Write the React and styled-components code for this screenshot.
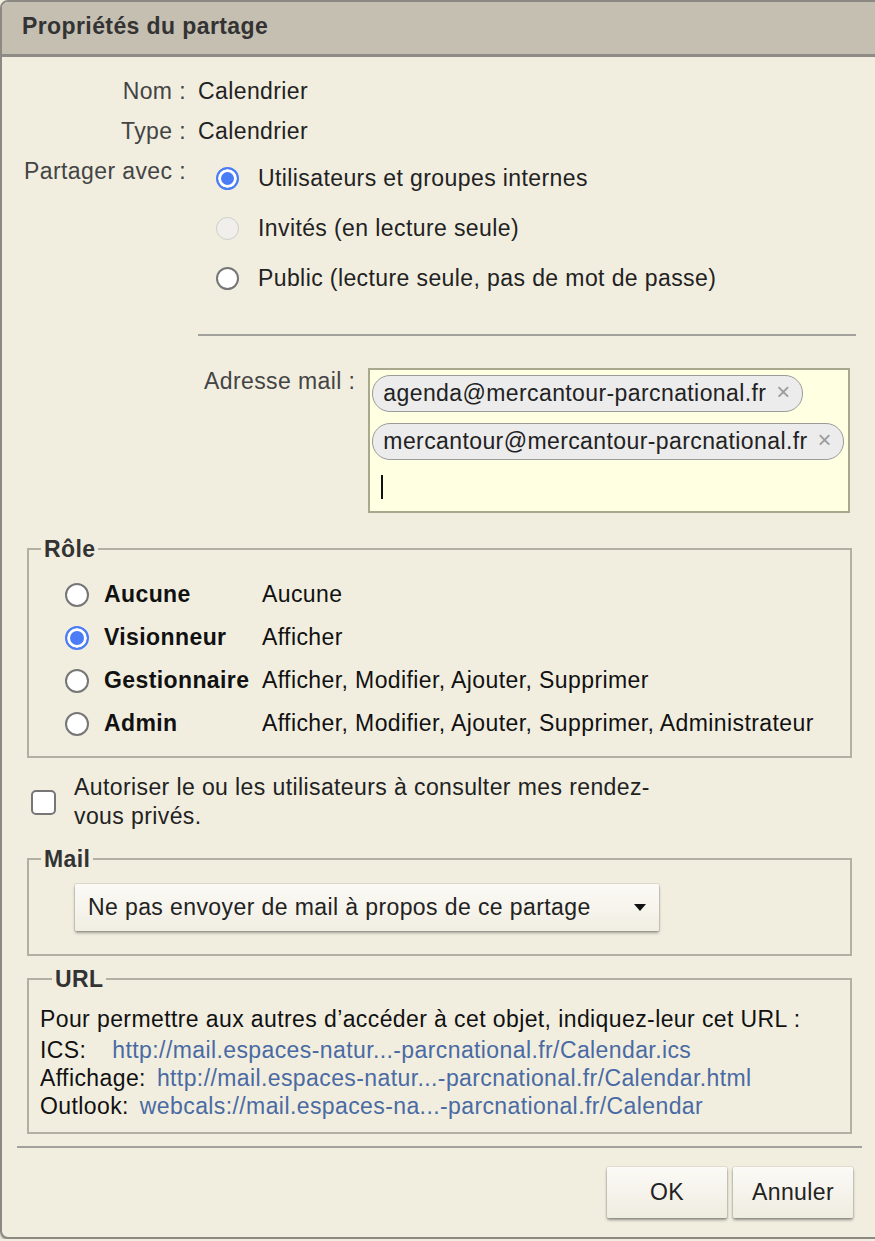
import React from 'react';
import styled, { createGlobalStyle } from 'styled-components';

const GlobalStyle = createGlobalStyle`
  html, body {
    margin: 0;
    padding: 0;
    background: #f1eee0;
    overflow: hidden;
  }
  body {
    font-family: 'Liberation Sans', Arial, sans-serif;
    font-size: 23px;
    letter-spacing: 0.4px;
    color: #222;
  }
`;

const Dialog = styled.div`
  width: 890px;
  height: 1239px;
  box-sizing: border-box;
  border: 2px solid #8c8983;
  border-radius: 8px;
  background: #f1eee0;
  display: flex;
  flex-direction: column;
  overflow: hidden;
  box-shadow: 0 2px 2px rgba(0, 0, 0, 0.25);
`;

const Header = styled.div`
  background: #c5bfb2;
  border-bottom: 3px solid #8f8c85;
  display: flex;
  align-items: center;
  padding: 0 0 3px 20px;
  box-sizing: border-box;
  height: 55px;
  font-size: 23px;
  font-weight: bold;
  color: #333;
`;

const Body = styled.div`
  flex: 1;
  display: flex;
  flex-direction: column;
  padding: 14px 0 0 0;
`;

const InfoGrid = styled.div`
  display: grid;
  grid-template-columns: 184px 1fr;
  column-gap: 12px;
`;

const Label = styled.div`
  text-align: right;
  color: #444;
  line-height: 40px;
  white-space: nowrap;
`;

const Value = styled.div`
  line-height: 40px;
  color: #222;
`;

const Options = styled.div`
  padding-top: 2px;
  padding-left: 18px;
`;

const Option = styled.label`
  display: flex;
  align-items: center;
  height: 50px;
  gap: 19px;
  color: #222;
`;

const Radio = styled.span`
  box-sizing: border-box;
  width: ${(p) => p.size || 23}px;
  height: ${(p) => p.size || 23}px;
  border-radius: 50%;
  flex-shrink: 0;
  background: ${(p) => (p.checked ? '#4a7cf5' : p.disabled ? '#f0efec' : '#fff')};
  border: ${(p) =>
    p.checked ? '2px solid #4a7cf5' : p.disabled ? '1.5px solid #cfcdc8' : '2px solid #767676'};
  box-shadow: ${(p) => (p.checked ? 'inset 0 0 0 3px #fff' : 'none')};
`;

const Separator = styled.div`
  height: 2px;
  background: #a3a19b;
  margin: ${(p) => p.margin};
`;

const MailRow = styled.div`
  display: flex;
  align-items: flex-start;
  gap: 13px;
  margin-left: 196px;
  padding-left: 6px;
`;

const MailLabel = styled.div`
  color: #444;
  line-height: 26px;
  white-space: nowrap;
`;

const TagBox = styled.div`
  box-sizing: border-box;
  width: 482px;
  height: 145px;
  background: #ffffe2;
  border: 2px solid #aaa78f;
  padding: 5px 2px;
  display: flex;
  flex-direction: column;
  align-items: flex-start;
  gap: 11px;
`;

const Tag = styled.span`
  box-sizing: border-box;
  height: 37px;
  display: inline-flex;
  align-items: center;
  padding: 0 11px 0 10px;
  background: #ececec;
  border: 1.5px solid #9a9a9a;
  border-radius: 18px;
  color: #222;
  gap: 10px;
  white-space: nowrap;
`;

const TagClose = styled.span`
  font-size: 24px;
  color: #9c9c9c;
  line-height: 1;
  margin-top: -4px;
`;

const Caret = styled.span`
  display: block;
  width: 2px;
  height: 24px;
  background: #111;
  margin: 4px 0 0 9px;
`;

const Fieldset = styled.fieldset`
  margin: ${(p) => p.margin};
  margin-left: 25px;
  width: 825px;
  box-sizing: border-box;
  border: 2px solid #b3afa2;
  padding: ${(p) => p.padding};
  min-width: 0;
`;

const Legend = styled.legend`
  font-weight: bold;
  color: #333;
  padding: 0 3px;
  margin-left: 12px;
  line-height: 24px;
`;

const RoleGrid = styled.div`
  display: grid;
  grid-template-columns: 24px 143px 1fr;
  column-gap: 15px;
  align-items: center;
  margin-left: 36px;
`;

const RoleName = styled.div`
  font-weight: bold;
  height: 43px;
  line-height: 43px;
  color: #111;
  white-space: nowrap;
`;

const RoleDesc = styled.div`
  color: #111;
  white-space: nowrap;
`;

const CheckRow = styled.label`
  display: flex;
  align-items: center;
  gap: 18px;
  margin: 15px 0 0 29px;
`;

const Checkbox = styled.span`
  box-sizing: border-box;
  width: 25px;
  height: 25px;
  border: 2px solid #767676;
  border-radius: 5px;
  background: #fff;
  flex-shrink: 0;
`;

const CheckText = styled.span`
  width: 590px;
  line-height: 29px;
  color: #222;
`;

const Select = styled.div`
  box-sizing: border-box;
  width: 584px;
  height: 47px;
  margin-left: 46px;
  display: flex;
  align-items: center;
  justify-content: space-between;
  padding: 0 13px 0 13px;
  background: linear-gradient(#fbfaf6, #f1eee2);
  border-radius: 2px;
  box-shadow: 0 0 0 1px rgba(0, 0, 0, 0.08), 0 2px 3px rgba(0, 0, 0, 0.35);
  color: #222;
  white-space: nowrap;
`;

const Arrow = styled.span`
  width: 0;
  height: 0;
  border-left: 6px solid transparent;
  border-right: 6px solid transparent;
  border-top: 7px solid #111;
`;

const UrlIntro = styled.div`
  line-height: 33px;
  color: #111;
  white-space: nowrap;
`;

const UrlLine = styled.div`
  line-height: 28px;
  color: #111;
  display: flex;
  gap: ${(p) => p.gap}px;
  white-space: nowrap;
`;

const Link = styled.a`
  color: #4a6aa3;
  text-decoration: none;
`;

const Footer = styled.div`
  display: flex;
  justify-content: flex-end;
  gap: 6px;
  padding: 19px 0 0 0;
  width: 851px;
`;

const Button = styled.button`
  width: 120px;
  height: 51px;
  border: none;
  border-radius: 2px;
  background: linear-gradient(#fbfaf6, #efece0);
  box-shadow: 0 0 0 1px rgba(0, 0, 0, 0.06), 0 2px 3px rgba(0, 0, 0, 0.4);
  font-family: 'Liberation Sans', Arial, sans-serif;
  font-size: 23px;
  letter-spacing: 0.4px;
  color: #222;
`;

const roles = [
  { name: 'Aucune', desc: 'Aucune' },
  { name: 'Visionneur', desc: 'Afficher', checked: true },
  { name: 'Gestionnaire', desc: 'Afficher, Modifier, Ajouter, Supprimer' },
  { name: 'Admin', desc: 'Afficher, Modifier, Ajouter, Supprimer, Administrateur' },
];

export default function App() {
  return (
    <>
      <GlobalStyle />
      <Dialog>
        <Header>Propriétés du partage</Header>
        <Body>
          <InfoGrid>
            <Label>Nom :</Label>
            <Value>Calendrier</Value>
            <Label>Type :</Label>
            <Value>Calendrier</Value>
            <Label>Partager avec :</Label>
            <Options>
              <Option>
                <Radio checked />
                Utilisateurs et groupes internes
              </Option>
              <Option>
                <Radio disabled />
                Invités (en lecture seule)
              </Option>
              <Option>
                <Radio />
                Public (lecture seule, pas de mot de passe)
              </Option>
            </Options>
          </InfoGrid>
          <Separator margin="31px 32px 32px 196px" />
          <MailRow>
            <MailLabel>Adresse mail :</MailLabel>
            <TagBox>
              <Tag>
                agenda@mercantour-parcnational.fr<TagClose>×</TagClose>
              </Tag>
              <Tag>
                mercantour@mercantour-parcnational.fr<TagClose>×</TagClose>
              </Tag>
              <Caret />
            </TagBox>
          </MailRow>

          <Fieldset margin="24px 0 0 0" padding="12px 0 11px 0">
            <Legend>Rôle</Legend>
            <RoleGrid>
              {roles.map((r) => (
                <React.Fragment key={r.name}>
                  <Radio size={24} checked={r.checked} />
                  <RoleName>{r.name}</RoleName>
                  <RoleDesc>{r.desc}</RoleDesc>
                </React.Fragment>
              ))}
            </RoleGrid>
          </Fieldset>

          <CheckRow>
            <Checkbox />
            <CheckText>Autoriser le ou les utilisateurs à consulter mes rendez-vous privés.</CheckText>
          </CheckRow>

          <Fieldset margin="16px 0 0 0" padding="13px 0 23px 0">
            <Legend>Mail</Legend>
            <Select>
              Ne pas envoyer de mail à propos de ce partage
              <Arrow />
            </Select>
          </Fieldset>

          <Fieldset margin="11px 0 0 0" padding="12px 11px 12px 11px">
            <Legend>URL</Legend>
            <UrlIntro>Pour permettre aux autres d’accéder à cet objet, indiquez-leur cet URL :</UrlIntro>
            <UrlLine gap={26}>
              ICS:
              <Link href="#">http://mail.espaces-natur...-parcnational.fr/Calendar.ics</Link>
            </UrlLine>
            <UrlLine gap={11}>
              Affichage:
              <Link href="#">http://mail.espaces-natur...-parcnational.fr/Calendar.html</Link>
            </UrlLine>
            <UrlLine gap={11}>
              Outlook:
              <Link href="#">webcals://mail.espaces-na...-parcnational.fr/Calendar</Link>
            </UrlLine>
          </Fieldset>

          <Separator margin="12px 26px 0 15px" />
          <Footer>
            <Button>OK</Button>
            <Button>Annuler</Button>
          </Footer>
        </Body>
      </Dialog>
    </>
  );
}
